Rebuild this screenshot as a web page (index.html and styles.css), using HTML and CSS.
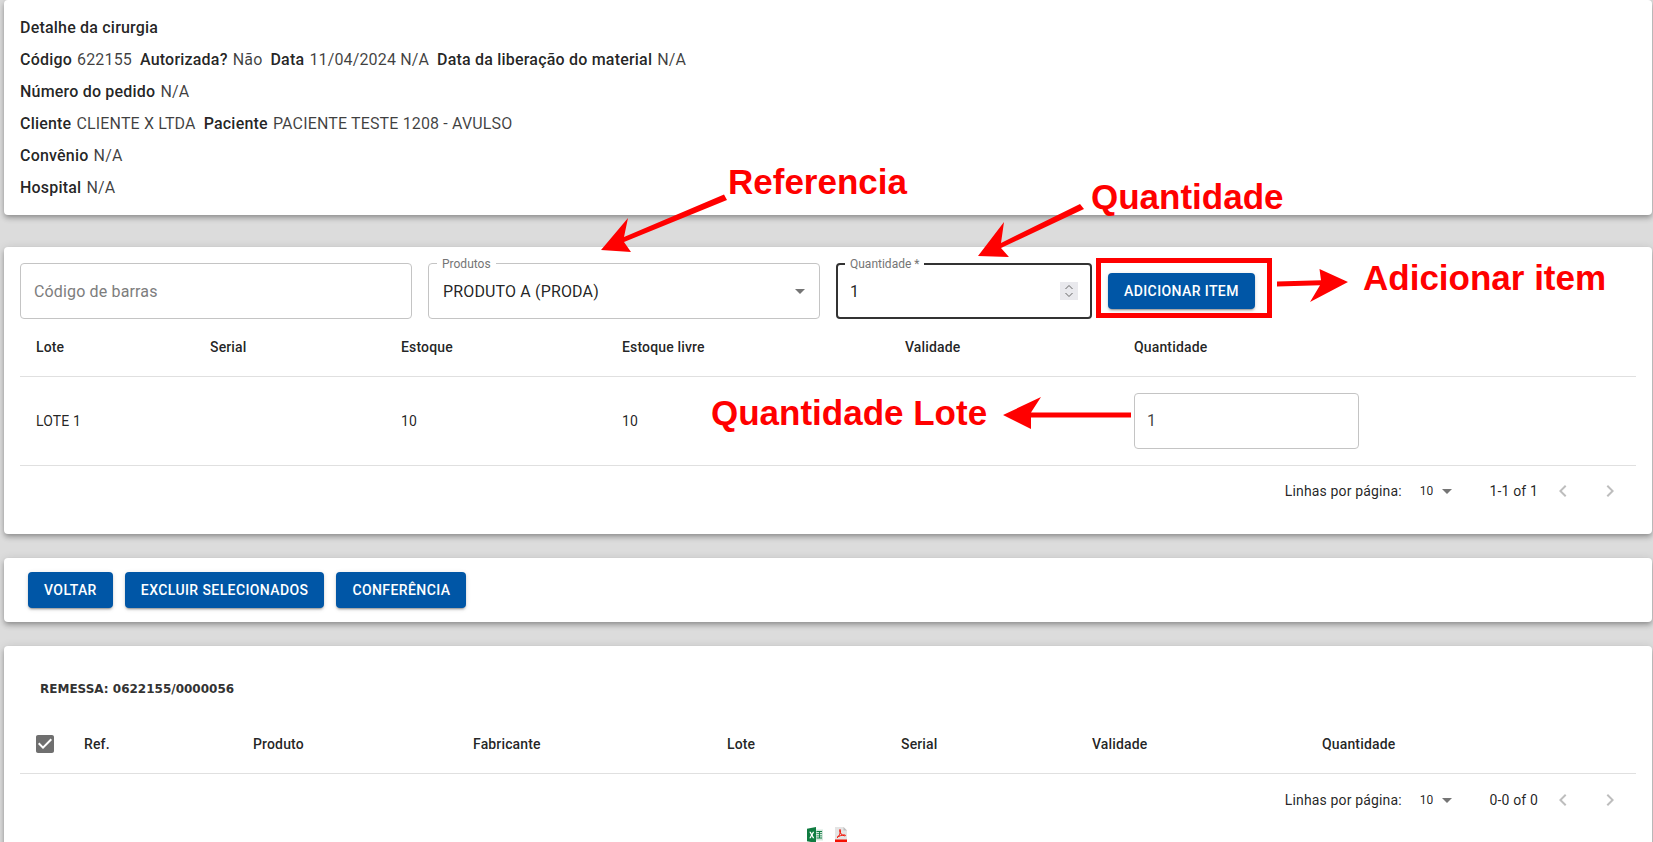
FILE: index.html
```html
<!DOCTYPE html>
<html lang="pt-BR">
<head>
<meta charset="utf-8">
<title>Detalhe da cirurgia</title>
<link rel="stylesheet" href="styles.css">
</head>
<body>
<main class="page">
  <section class="card card-detail">
    <p class="row"><b>Detalhe da cirurgia</b></p>
    <p class="row"><span class="pair"><b>Código</b> 622155</span><span class="pair"><b>Autorizada?</b> Não</span><span class="pair"><b>Data</b> 11/04/2024 N/A</span><span class="pair"><b>Data da liberação do material</b> N/A</span></p>
    <p class="row"><b>Número do pedido</b> N/A</p>
    <p class="row"><span class="pair"><b>Cliente</b> CLIENTE X LTDA</span><span class="pair"><b>Paciente</b> PACIENTE TESTE 1208 - AVULSO</span></p>
    <p class="row"><b>Convênio</b> N/A</p>
    <p class="row"><b>Hospital</b> N/A</p>
  </section>

  <section class="card card-items">
    <form class="form-row">
      <fieldset class="field field-wide">
        <input class="field-input" type="text" placeholder="Código de barras">
      </fieldset>
      <fieldset class="field field-wide field-select">
        <legend class="field-label">Produtos</legend>
        <input class="field-input" type="text" value="PRODUTO A (PRODA)">
        <svg class="select-arrow" viewBox="0 0 24 24"><path d="M7 10l5 5 5-5z"/></svg>
      </fieldset>
      <fieldset class="field field-focus">
        <legend class="field-label">Quantidade *</legend>
        <input class="field-input" type="text" value="1">
        <span class="spinner">
          <svg viewBox="0 0 18 18"><path d="M5.5 7 9 3.5 12.500 7M5.500 11 9 14.500 12.500 11"/></svg>
        </span>
      </fieldset>
      <button class="btn" type="button">Adicionar item</button>
    </form>

    <table class="grid grid-lots">
      <thead>
        <tr><th>Lote</th><th>Serial</th><th>Estoque</th><th>Estoque livre</th><th>Validade</th><th>Quantidade</th></tr>
      </thead>
      <tbody>
        <tr>
          <td>LOTE 1</td><td></td><td>10</td><td>10</td><td></td>
          <td><input class="qty-input" type="text" value="1"></td>
        </tr>
      </tbody>
    </table>
    <div class="pager pager-lots">
      <span>Linhas por página:</span>
      <span class="pager-size">10<svg class="pager-arrow" viewBox="0 0 24 24"><path d="M7 10l5 5 5-5z"/></svg></span>
      <span>1-1 of 1</span>
      <span class="pager-nav">
        <svg viewBox="0 0 24 24"><path d="M15.410 7.410 14 6l-6 6 6 6 1.410-1.410L10.830 12z"/></svg>
        <svg viewBox="0 0 24 24"><path d="M10 6 8.590 7.410 13.170 12l-4.580 4.590L10 18l6-6z"/></svg>
      </span>
    </div>
  </section>

  <section class="card card-actions">
    <button class="btn" type="button">Voltar</button>
    <button class="btn" type="button">Excluir selecionados</button>
    <button class="btn" type="button">Conferência</button>
  </section>

  <section class="card card-shipment">
    <h2 class="shipment-title">REMESSA: 0622155/0000056</h2>
    <table class="grid grid-shipment">
      <thead>
        <tr>
          <th>
            <svg class="check" viewBox="0 0 24 24"><path d="M19 3H5c-1.110 0-2 .9-2 2v14c0 1.100.89 2 2 2h14c1.110 0 2-.9 2-2V5c0-1.100-.89-2-2-2zm-9 14l-5-5 1.410-1.410L10 14.170l7.590-7.590L19 8l-9 9z"/></svg>
          </th>
          <th>Ref.</th><th>Produto</th><th>Fabricante</th><th>Lote</th><th>Serial</th><th>Validade</th><th>Quantidade</th>
        </tr>
      </thead>
    </table>
    <div class="pager">
      <span>Linhas por página:</span>
      <span class="pager-size">10<svg class="pager-arrow" viewBox="0 0 24 24"><path d="M7 10l5 5 5-5z"/></svg></span>
      <span>0-0 of 0</span>
      <span class="pager-nav">
        <svg viewBox="0 0 24 24"><path d="M15.410 7.410 14 6l-6 6 6 6 1.410-1.410L10.830 12z"/></svg>
        <svg viewBox="0 0 24 24"><path d="M10 6 8.590 7.410 13.170 12l-4.580 4.590L10 18l6-6z"/></svg>
      </span>
    </div>
    <div class="exports">
      <svg class="export-icon" viewBox="0 0 16 16">
        <path fill="#d5e8de" d="M8 2.500h8v11H8z"/>
        <path fill="#107c41" d="M9.500 4H15v.9H9.500zM9.500 6.200H15v.9H9.500zM9.500 8.400H15v.9H9.500zM9.500 10.600H15v.9H9.500zM12 4h.9v7.500H12z"/>
        <path fill="#107c41" d="M0 1.800 9 0v16L0 14.200z"/>
        <path fill="#fff" d="M2.300 4.800h1.500l1 2 1-2h1.400L5.600 8l1.700 3.200H5.800l-1-2.100-1 2.100H2.300L4 8z"/>
      </svg>
      <svg class="export-icon" viewBox="0 0 16 16">
        <path fill="#e4e4e4" d="M2 0h8.500L14 3.500V16H2z"/>
        <path fill="#bdbdbd" d="M10.500 0 14 3.500h-3.500z"/>
        <path fill="none" stroke="#f40f02" stroke-width="1" d="M4 10.500c2-1 3.500-4 3.500-7 0-1.500-1-1.500-.9 0 .2 2.500 2 4.800 5 5.300 1.200.2 1.200-.9 0-.9-2.500 0-5.500 1-7.600 2.600z"/>
        <path fill="#f40f02" d="M2 12.500h12V16H2z"/>
      </svg>
    </div>
  </section>

  <div class="note note-ref">Referencia</div>
  <div class="note note-qty">Quantidade</div>
  <div class="note note-add">Adicionar item</div>
  <div class="note note-lot">Quantidade Lote</div>
  <svg class="markup" viewBox="0 0 1653 842">
    <path d="M724 194.500 727 200 624 242 631 252 601 250 628 218 624 237z"/>
    <path d="M1080 204 1084 209 1001 248 1009 257 978 256 1004 222 1001 243z"/>
    <path d="M1277 281.500 1321 280.300 1319.500 269 1348 282 1310 302 1320 285.300 1277 286.500z"/>
    <path d="M1131 412.500V417.500H1031V429L1003 415 1041 397 1031 412.500z"/>
    <rect class="markup-box" x="1098.500" y="260.500" width="171" height="55"/>
  </svg>
</main>
</body>
</html>
```

FILE: styles.css
```css
* { box-sizing: border-box; }

html, body {
  margin: 0;
  height: 842px;
  overflow: hidden;
}

body {
  background: #dcdcdc;
  color: rgba(0, 0, 0, 0.87);
  font-family: Roboto, "Liberation Sans", sans-serif;
  font-size: 14px;
  letter-spacing: 0.15px;
}

.page {
  position: relative;
  height: 842px;
  padding: 0 1px 0 4px;
  overflow: hidden;
}

.card {
  background: #fff;
  border-radius: 4px;
  box-shadow: 0 2px 4px -1px rgba(0, 0, 0, 0.2), 0 4px 5px 0 rgba(0, 0, 0, 0.14), 0 1px 10px 0 rgba(0, 0, 0, 0.12);
}

/* Detail card */
.card-detail {
  height: 215px;
  padding: 12px 16px 11px;
  margin-bottom: 32px;
  font-size: 16px;
}

.row {
  margin: 0;
  height: 32px;
  line-height: 32px;
  color: rgba(0, 0, 0, 0.75);
}

.row b {
  margin-right: 1px;
  font-weight: 500;
  letter-spacing: 0.2px;
  color: rgba(0, 0, 0, 0.87);
}

.pair { margin-right: 8px; }

/* Items card */
.card-items {
  height: 287px;
  padding: 16px;
  margin-bottom: 24px;
}

.form-row {
  display: flex;
  align-items: center;
  gap: 16px;
}

.field {
  position: relative;
  display: flex;
  align-items: center;
  flex: none;
  width: 256px;
  height: 56px;
  margin: 0;
  padding: 0 13px;
  border: 1px solid #c4c4c4;
  border-radius: 4px;
  min-inline-size: 0;
}

.field-wide { width: 392px; }

.field-select { padding-left: 14px; }

.field-select .field-label { margin-left: -6px; }

.field-focus {
  padding: 0 12px;
  border: 2px solid #333;
}

.field-label {
  height: 0;
  padding: 0 5px;
  margin-left: -5px;
  color: #757575;
  font-size: 12px;
  line-height: 0;
  letter-spacing: 0;
  white-space: nowrap;
}

.field-input {
  flex: 1;
  min-width: 0;
  height: 100%;
  padding: 0;
  border: 0;
  outline: 0;
  background: none;
  color: rgba(0, 0, 0, 0.87);
  font: 16px Roboto, sans-serif;
  letter-spacing: 0.15px;
}

.field-input::placeholder {
  color: #7d7d7d;
  opacity: 1;
}

.select-arrow {
  flex: none;
  width: 24px;
  height: 24px;
  margin-right: -6px;
  fill: #757575;
}

.spinner {
  flex: none;
  width: 18px;
  height: 18px;
  background: #e9e9ed;
}

.spinner svg {
  display: block;
  width: 18px;
  height: 18px;
  fill: none;
  stroke: #666;
  stroke-width: 1;
}

.btn {
  height: 36px;
  padding: 0 16px;
  border: 0;
  border-radius: 4px;
  background: #0056a6;
  color: #fff;
  font: 500 14px Roboto, sans-serif;
  letter-spacing: 0.4px;
  text-transform: uppercase;
  box-shadow: 0 3px 1px -2px rgba(0, 0, 0, 0.2), 0 2px 2px 0 rgba(0, 0, 0, 0.14), 0 1px 5px 0 rgba(0, 0, 0, 0.12);
}

/* Tables */
.grid {
  width: 100%;
  border-collapse: collapse;
  table-layout: fixed;
}

.grid th,
.grid td {
  padding: 0 16px;
  text-align: left;
  font-weight: 400;
  border-bottom: 1px solid #e0e0e0;
}

.grid th {
  font-weight: 500;
}

.grid-lots th { height: 57px; }
.grid-lots td { height: 89px; }

.grid-lots th:nth-child(1) { width: 174px; }
.grid-lots th:nth-child(2) { width: 191px; }
.grid-lots th:nth-child(3) { width: 221px; }
.grid-lots th:nth-child(4) { width: 283px; }
.grid-lots th:nth-child(5) { width: 229px; }

.qty-input {
  display: block;
  width: 225px;
  height: 56px;
  padding: 0 12px;
  border: 1px solid #c4c4c4;
  border-radius: 4px;
  outline: 0;
  color: rgba(0, 0, 0, 0.75);
  font: 16px Roboto, sans-serif;
  letter-spacing: 0.15px;
}

.pager {
  display: flex;
  align-items: center;
  justify-content: flex-end;
  height: 52px;
  padding-right: 6px;
}

.pager-lots { height: 50px; }

.pager-size {
  display: flex;
  align-items: center;
  margin: 0 32px 0 18px;
  font-size: 12px;
}

.pager-arrow {
  width: 24px;
  height: 24px;
  margin-left: 1px;
  margin-right: -1px;
  fill: #757575;
}

.pager-nav {
  display: flex;
  gap: 23px;
  margin-left: 13px;
  margin-right: 8px;
}

.pager-nav svg {
  width: 24px;
  height: 24px;
  fill: rgba(0, 0, 0, 0.26);
}

/* Actions card */
.card-actions {
  display: flex;
  align-items: center;
  gap: 12px;
  height: 64px;
  padding: 0 24px;
  margin-bottom: 24px;
}

/* Shipment card */
.card-shipment {
  height: 260px;
  padding: 0 16px;
}

.shipment-title {
  margin: 0;
  padding: 36px 20px 0;
  height: 69px;
  color: #333;
  font: bold 12px/14px "DejaVu Sans", sans-serif;
  letter-spacing: 0;
}

.grid-shipment th { height: 58px; }

.grid-shipment th:nth-child(1) { width: 48px; padding: 0 0 0 13px; }
.grid-shipment th:nth-child(2) { width: 169px; }
.grid-shipment th:nth-child(3) { width: 220px; }
.grid-shipment th:nth-child(4) { width: 254px; }
.grid-shipment th:nth-child(5) { width: 174px; }
.grid-shipment th:nth-child(6) { width: 191px; }
.grid-shipment th:nth-child(7) { width: 230px; }

.check {
  display: block;
  width: 24px;
  height: 24px;
  fill: #6f6f6f;
}

.exports {
  display: flex;
  justify-content: center;
  gap: 10px;
  margin-top: 1px;
}

.export-icon {
  width: 16px;
  height: 16px;
}

/* Annotations drawn over the screenshot */
.note {
  position: absolute;
  color: #f00;
  font: bold 35px/40px "Liberation Sans", Arial, sans-serif;
  letter-spacing: 0;
  white-space: nowrap;
}

.note-ref { left: 728px; top: 162px; }
.note-qty { left: 1091px; top: 177px; }
.note-add { left: 1363px; top: 258px; }
.note-lot { left: 711px; top: 393px; }

.markup {
  position: absolute;
  inset: 0;
  width: 1653px;
  height: 842px;
  pointer-events: none;
  fill: #f00;
}

.markup-box {
  fill: none;
  stroke: #f00;
  stroke-width: 5;
}
```
